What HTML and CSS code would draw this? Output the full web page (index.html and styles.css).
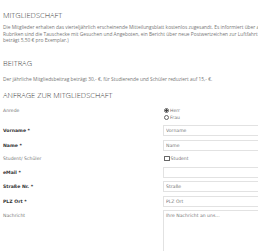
FILE: index.html
```html
<!DOCTYPE html>
<html>
<head>
    <title>Mitgliedschaft</title>
    <link rel="stylesheet" href="styles.css">
</head>
<body>
    <div class="page">
        <h2 class="section-title first">MITGLIEDSCHAFT</h2>
        <p class="text intro">
            <span class="line">Die Mitglieder erhalten das vierteljährlich erscheinende Mitteilungsblatt kostenlos zugesandt. Es informiert über aktuelle Themen der Aerophilatelie. In weiteren</span>
            <span class="line">Rubriken sind die Tauschecke mit Gesuchen und Angeboten, ein Bericht über neue Postwertzeichen zur Luftfahrt und Raumfahrt. (Der Einzelpreis</span>
            <span class="line">beträgt 5,50 € pro Exemplar.)</span>
        </p>
        <h2 class="section-title fee">BEITRAG</h2>
        <p class="text fee-text">Der jährliche Mitgliedsbeitrag beträgt 30,- €, für Studierende und Schüler reduziert auf 15,- €.</p>
        <h2 class="section-title request">ANFRAGE ZUR MITGLIEDSCHAFT</h2>

        <form class="member-form">
            <label class="form-label plain short">Anrede</label>
            <div class="radio-group">
                <label class="option"><input type="radio" name="anrede" checked>Herr</label>
                <label class="option"><input type="radio" name="anrede">Frau</label>
            </div>

            <label class="form-label">Vorname *</label>
            <input type="text" class="form-input" placeholder="Vorname">

            <label class="form-label">Name *</label>
            <input type="text" class="form-input" placeholder="Name">

            <label class="form-label plain check-label">Student/ Schüler</label>
            <label class="option check-row"><input type="checkbox">Student</label>

            <label class="form-label">eMail *</label>
            <input type="email" class="form-input">

            <label class="form-label">Straße Nr. *</label>
            <input type="text" class="form-input" placeholder="Straße">

            <label class="form-label">PLZ Ort *</label>
            <input type="text" class="form-input" placeholder="PLZ Ort">

            <label class="form-label plain">Nachricht</label>
            <textarea class="form-input message" placeholder="Ihre Nachricht an uns..."></textarea>
        </form>
    </div>
</body>
</html>
```

FILE: styles.css
```css
html, body {
    margin: 0;
    padding: 0;
    background: #fff;
    overflow: hidden;
}
.page {
    width: 330px;
    padding-left: 3px;
}
.section-title {
    font-family: "Open Sans", sans-serif;
    font-weight: 300;
    font-size: 7.5px;
    line-height: 10px;
    color: #3a3a3a;
    margin: 0;
}
.section-title.first {
    margin-top: 10px;
}
.section-title.fee {
    margin-top: 14.5px;
}
.section-title.request {
    margin-top: 7.5px;
}
.text {
    font-family: "Open Sans", sans-serif;
    font-size: 4.85px;
    line-height: 6.5px;
    color: #777;
    margin: 0;
}
.text .line {
    display: block;
    white-space: nowrap;
}
.intro {
    margin-top: 4px;
}
.fee-text {
    margin-top: 8px;
}
.member-form {
    display: grid;
    grid-template-columns: 160px 1fr;
    row-gap: 3.5px;
    margin-top: 6.5px;
    font-family: "DejaVu Sans", Verdana, sans-serif;
    font-size: 4.6px;
}
.form-label {
    line-height: 11px;
    font-weight: bold;
    color: #333;
}
.form-label.plain {
    font-weight: normal;
    color: #777;
}
.form-label.short {
    line-height: 7.5px;
}
.form-label.check-label {
    line-height: 9px;
}
.radio-group {
    display: flex;
    flex-direction: column;
}
.option {
    display: flex;
    align-items: center;
    height: 7.5px;
    color: #777;
}
.check-row {
    height: 9px;
}
.option input {
    appearance: none;
    width: 5px;
    height: 5px;
    margin: 0 1px 0 1px;
    border: 0.8px solid #666;
    background: #fff;
    box-sizing: border-box;
}
.option input[type="radio"] {
    border-radius: 50%;
}
.option input[type="radio"]:checked {
    background: radial-gradient(circle, #444 0, #444 1.2px, #fff 1.4px);
}
.option input[type="checkbox"] {
    width: 5.5px;
    height: 5.5px;
    border-radius: 0.5px;
}
.form-input {
    height: 11px;
    box-sizing: border-box;
    border: 1px solid #e2e2e2;
    padding: 0 2px;
    margin: 0;
    font-family: "DejaVu Sans", Verdana, sans-serif;
    font-size: 4.6px;
    color: #555;
    background: #fff;
    outline: none;
}
.form-input::placeholder {
    color: #777;
}
.form-input.message {
    height: 46px;
    padding: 2px;
    resize: none;
}
```
